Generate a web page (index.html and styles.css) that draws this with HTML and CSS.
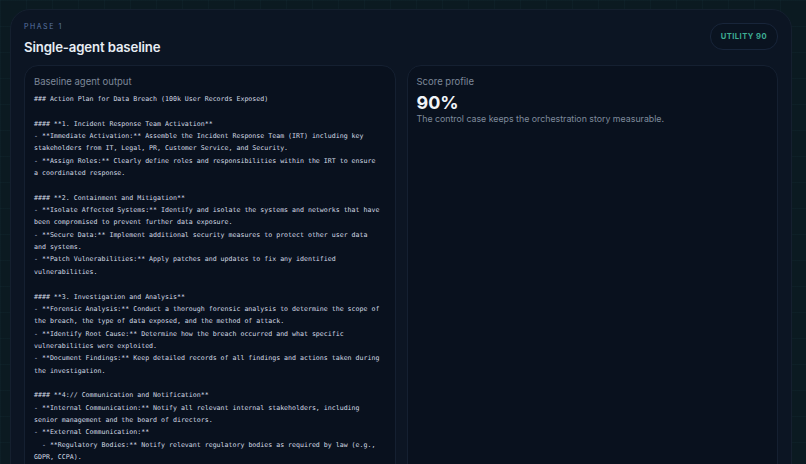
FILE: index.html
```html
<!DOCTYPE html>
<html lang="en">
  <head>
    <meta charset="UTF-8" />
    <meta name="viewport" content="width=device-width, initial-scale=1.0" />
    <title>Phase 1 - Single-agent baseline</title>
    <link rel="stylesheet" href="styles.css">
  </head>

  <body>
    <section class="phase">
      <div class="phase-head">
        <div>
          <div class="eyebrow">Phase 1</div>
          <h2 class="phase-title">Single-agent baseline</h2>
        </div>
        <span class="badge">Utility 90</span>
      </div>

      <div class="phase-grid">
        <div class="card">
          <div class="card-label">Baseline agent output</div>
          <pre class="output">### Action Plan for Data Breach (100k User Records Exposed)

#### **1. Incident Response Team Activation**
- **Immediate Activation:** Assemble the Incident Response Team (IRT) including key stakeholders from IT, Legal, PR, Customer Service, and Security.
- **Assign Roles:** Clearly define roles and responsibilities within the IRT to ensure a coordinated response.

#### **2. Containment and Mitigation**
- **Isolate Affected Systems:** Identify and isolate the systems and networks that have been compromised to prevent further data exposure.
- **Secure Data:** Implement additional security measures to protect other user data and systems.
- **Patch Vulnerabilities:** Apply patches and updates to fix any identified vulnerabilities.

#### **3. Investigation and Analysis**
- **Forensic Analysis:** Conduct a thorough forensic analysis to determine the scope of the breach, the type of data exposed, and the method of attack.
- **Identify Root Cause:** Determine how the breach occurred and what specific vulnerabilities were exploited.
- **Document Findings:** Keep detailed records of all findings and actions taken during the investigation.

#### **4:// Communication and Notification**
- **Internal Communication:** Notify all relevant internal stakeholders, including senior management and the board of directors.
- **External Communication:**
  - **Regulatory Bodies:** Notify relevant regulatory bodies as required by law (e.g., GDPR, CCPA).</pre>
        </div>

        <div class="card">
          <div class="card-label">Score profile</div>
          <div class="score">90%</div>
          <p class="score-note">The control case keeps the orchestration story measurable.</p>
        </div>
      </div>
    </section>
  </body>
</html>
```

FILE: styles.css
```css
body {
  margin: 0;
  height: 464px;
  overflow: hidden;
  font-family: "Inter", "Noto Sans", sans-serif;
  background-color: #0b1a21;
  background-image:
    linear-gradient(rgba(60, 120, 130, 0.06) 1px, transparent 1px),
    linear-gradient(90deg, rgba(60, 120, 130, 0.06) 1px, transparent 1px);
  background-size: 26px 26px;
}

.phase {
  margin: 9px 14px 0 10px;
  padding: 12px 13px 20px;
  background-color: #0c1523;
  border: 1px solid #15202f;
  border-radius: 20px;
  min-height: 520px;
  box-sizing: border-box;
}

.phase-head {
  display: flex;
  justify-content: space-between;
  align-items: flex-start;
}

.eyebrow {
  font-size: 7px;
  letter-spacing: 0.22em;
  text-transform: uppercase;
  color: #5b76a3;
  line-height: 10px;
}

.phase-title {
  margin: 6px 0 0;
  font-size: 13.2px;
  font-weight: 600;
  color: #e8edf4;
  line-height: 18px;
  letter-spacing: -0.01em;
}

.badge {
  display: inline-block;
  margin-top: 1px;
  padding: 0 10px;
  height: 25px;
  line-height: 25px;
  border-radius: 13px;
  border: 1px solid #18253a;
  background-color: #0a1320;
  color: #3eae94;
  font-size: 7.6px;
  font-weight: 700;
  letter-spacing: 0.06em;
  text-transform: uppercase;
}

.phase-grid {
  display: grid;
  grid-template-columns: 1fr 1fr;
  gap: 11px;
  margin-top: 9px;
}

.card {
  background-color: #09111e;
  border: 1px solid #152031;
  border-radius: 14px;
  padding: 9px 12px 10px 9px;
  min-height: 460px;
}

.card-label {
  font-size: 9.5px;
  color: #7d8899;
  line-height: 14px;
}

.output {
  margin: 4px 0 0;
  font-family: "DejaVu Sans Mono", "Liberation Mono", monospace;
  font-size: 6.6px;
  line-height: 12.34px;
  color: #d3dae4;
  white-space: pre-wrap;
}

.score {
  margin-top: 3px;
  font-size: 18px;
  font-weight: 700;
  color: #f1f4f8;
  line-height: 21px;
}

.score-note {
  margin: 0;
  font-size: 8.8px;
  color: #7f8b9c;
  line-height: 12px;
}
```
